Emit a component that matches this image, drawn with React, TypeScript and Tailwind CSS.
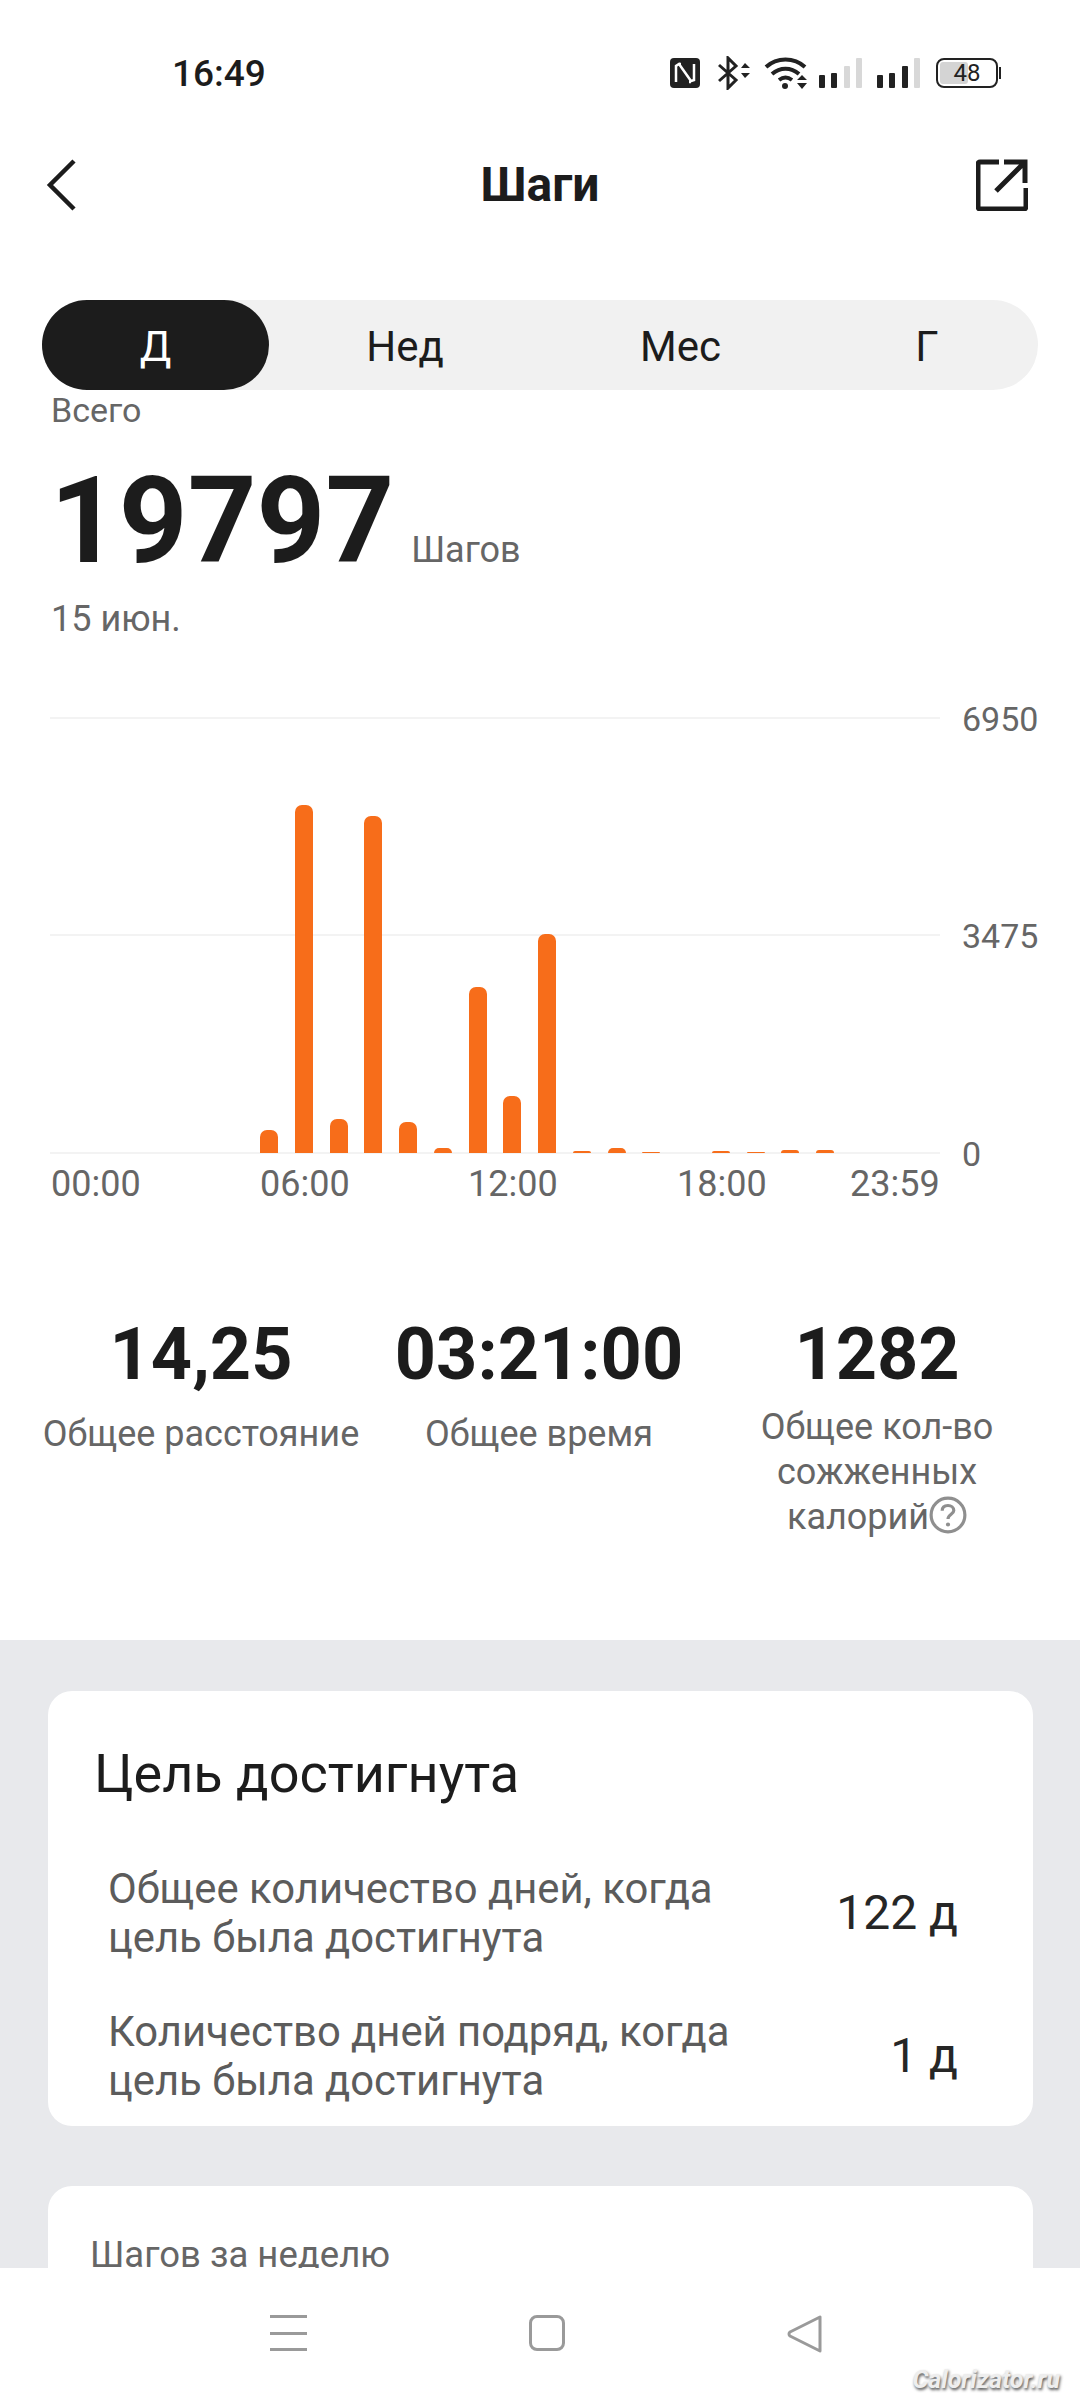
const bars = [23, 348, 34, 337, 31, 5, 166, 57, 219, 2, 5, 1, 0, 2, 1, 3, 3];

function StatusIcons() {
  return (
    <div className="flex items-center">
      <svg width="30" height="30" viewBox="0 0 30 30">
        <rect width="30" height="30" rx="4" fill="#222" />
        <path d="M6 24V8l3-2 12 17 3-1V6M11 6h-2M19 24h2" stroke="#fff" strokeWidth="2.500" fill="none" />
      </svg>
      <svg width="36" height="34" viewBox="0 0 36 34" className="ml-[16px]" fill="none">
        <path d="M3 9l17 15-8 8V2l8 8L3 25" stroke="#222" strokeWidth="3" />
        <path d="M25 12l4-5 5 5zM25 17h9l-5 5z" fill="#222" />
      </svg>
      <svg width="46" height="34" viewBox="0 0 46 34" className="ml-[12px]" fill="none">
        <path d="M2 11c11-10 28-10 39 0M8 18c8-7 19-7 27 0M15 24c4-3 9-3 13 0" stroke="#222" strokeWidth="4" />
        <circle cx="21" cy="30" r="3" fill="#222" />
        <path d="M33 24l5-5 5 5zM33 27h10l-5 6z" fill="#222" />
      </svg>
      <svg width="46" height="30" viewBox="0 0 46 30" className="ml-[9px]">
        <rect x="0" y="17" width="6" height="13" rx="1" fill="#222" />
        <rect x="12" y="15" width="6" height="15" rx="1" fill="#222" />
        <rect x="25" y="8" width="6" height="22" rx="1" fill="#d8d8d8" />
        <rect x="37" y="0" width="6" height="30" rx="1" fill="#d8d8d8" />
      </svg>
      <svg width="46" height="30" viewBox="0 0 46 30" className="ml-[12px]">
        <rect x="0" y="17" width="6" height="13" rx="1" fill="#222" />
        <rect x="12" y="15" width="6" height="15" rx="1" fill="#222" />
        <rect x="25" y="8" width="6" height="22" rx="1" fill="#222" />
        <rect x="37" y="0" width="6" height="30" rx="1" fill="#d8d8d8" />
      </svg>
      <div className="ml-[13px] flex items-center">
        <div className="relative flex h-[30px] w-[62px] items-center justify-center overflow-hidden rounded-[8px] border-2 border-[#222]">
          <div className="absolute inset-y-[2px] left-[2px] w-[28px] rounded-[3px] bg-[#d4d4d4]" />
          <span className="relative text-[24px] leading-none text-[#222]">48</span>
        </div>
        <div className="ml-[1px] h-[12px] w-[2px] bg-[#222]" />
      </div>
    </div>
  );
}

function Tabs() {
  return (
    <div className="mx-[42px] mt-[72px] flex h-[90px] items-center rounded-[45px] bg-[#f1f1f1] pt-[3px] text-[42px] text-[#1c1c1c]">
      <div className="-mt-[3px] flex h-[90px] w-[227px] items-center justify-center rounded-[45px] bg-[#1c1c1c] pt-[3px] text-white">Д</div>
      <div className="ml-[96px] w-[80px] text-center">Нед</div>
      <div className="ml-[195px] w-[80px] text-center">Мес</div>
      <div className="ml-[167px] w-[80px] text-center">Г</div>
    </div>
  );
}

function Chart() {
  return (
    <div className="relative ml-[50px] mt-[77px] h-[490px] w-[990px]">
      {/* grid lines */}
      <div className="absolute left-0 top-0 h-[2px] w-[890px] bg-[#f3f3f3]" />
      <div className="absolute left-0 top-[217px] h-[2px] w-[890px] bg-[#f3f3f3]" />
      <div className="absolute left-0 top-[435px] h-[2px] w-[890px] bg-[#f3f3f3]" />
      <span className="absolute left-[912px] top-[-18px] text-[34px] leading-[40px] text-[#666]">6950</span>
      <span className="absolute left-[912px] top-[199px] text-[34px] leading-[40px] text-[#666]">3475</span>
      <span className="absolute left-[912px] top-[417px] text-[34px] leading-[40px] text-[#666]">0</span>

      <div className="absolute left-[210px] top-0 flex h-[436px] items-end gap-[16.75px]">
        {bars.map((h, i) => (
          <div
            key={i}
            className="w-[18px] rounded-t-[7px] bg-[#f76d1a]"
            style={{ height: h }}
          />
        ))}
      </div>

      <div className="absolute left-[1px] top-[447px] flex text-[36px] leading-[40px] text-[#666]">
        <span className="w-[88px]">00:00</span>
        <span className="ml-[121px] w-[88px]">06:00</span>
        <span className="ml-[120px] w-[88px]">12:00</span>
        <span className="ml-[121px] w-[88px]">18:00</span>
        <span className="ml-[85px] w-[88px]">23:59</span>
      </div>
    </div>
  );
}

function Stats() {
  return (
    <div className="mt-[106px] flex h-[327px] items-start text-center">
      <div className="ml-[21px] w-[360px]">
        <div className="text-[72px] font-bold leading-[84px] text-[#1c1c1c]">14,25</div>
        <div className="mt-[15px] text-[36px] leading-[45px] text-[#666]">Общее расстояние</div>
      </div>
      <div className="w-[316px]">
        <div className="text-[72px] font-bold leading-[84px] text-[#1c1c1c]">03:21:00</div>
        <div className="mt-[15px] text-[36px] leading-[45px] text-[#666]">Общее время</div>
      </div>
      <div className="w-[360px]">
        <div className="text-[72px] font-bold leading-[84px] text-[#1c1c1c]">1282</div>
        <div className="mt-[8px] text-[36px] leading-[45px] text-[#666]">
          Общее кол-во
          <br />
          сожженных
          <br />
          <span className="inline-flex items-center">
            калорий
            <svg width="38" height="38" viewBox="0 0 36 36" fill="none" className="mb-[6px]">
              <circle cx="18" cy="18" r="16" stroke="#8f8f8f" strokeWidth="3" />
              <path d="M12.5 14c0-3.5 2.500-5 5.500-5s5.500 2 5.500 4.800c0 3.500-5.500 3.700-5.500 8" stroke="#8f8f8f" strokeWidth="3" />
              <circle cx="18" cy="27" r="2" fill="#8f8f8f" />
            </svg>
          </span>
        </div>
      </div>
    </div>
  );
}

function GoalRow({ text, value }: { text: string[]; value: string }) {
  return (
    <div className="flex items-center justify-between pl-[14px] pr-[54px]">
      <div className="text-[41.8px] leading-[49px] text-[#5c5c5c]">
        {text[0]}
        <br />
        {text[1]}
      </div>
      <div className="text-[48px] text-[#262626]">{value}</div>
    </div>
  );
}

export default function App() {
  return (
    <div className="flex h-[2400px] w-[1080px] flex-col overflow-hidden bg-white font-['Roboto',sans-serif]">
      <div className="flex-1 overflow-hidden">
        {/* Status bar */}
        <div className="flex h-[112px] items-center justify-between pl-[172px] pr-[79px] pt-[34px]">
          <span className="text-[37px] font-medium leading-none text-[#1c1c1c]">16:49</span>
          <StatusIcons />
        </div>

        {/* Header */}
        <div className="flex h-[116px] items-center justify-between pl-[46px] pr-[52px] pt-[29px]">
          <div className="w-[58px]">
            <svg width="32" height="54" viewBox="0 0 32 54" fill="none">
              <path d="M28 3L4 27l24 24" stroke="#1c1c1c" strokeWidth="4.500" />
            </svg>
          </div>
          <span className="text-[48px] font-bold leading-none text-[#1c1c1c]">Шаги</span>
          <svg width="52" height="52" viewBox="0 0 52 52" fill="none">
            <path d="M23 3H4a2 2 0 0 0-2 2v43a2 2 0 0 0 2 2h44a2 2 0 0 0 2-2V29" stroke="#1c1c1c" strokeWidth="5" />
            <path d="M20 32L49 3M28 3h21v21" stroke="#1c1c1c" strokeWidth="5" />
          </svg>
        </div>

        <Tabs />

        <div className="ml-[51px] text-[34px] leading-[40px] text-[#666]">Всего</div>
        <div className="ml-[50px] mt-[26px] flex items-baseline">
          <span className="text-[120px] font-bold leading-[130px] text-[#1c1c1c]">19797</span>
          <span className="ml-[17px] text-[36px] text-[#666]">Шагов</span>
        </div>
        <div className="ml-[51px] mt-[12px] text-[36px] leading-[42px] text-[#666]">15 июн.</div>

        <Chart />
        <Stats />

        <div className="bg-[#e8e9ec] pl-[48px] pr-[47px] pt-[51px]">
          <div className="h-[435px] rounded-[24px] bg-white pl-[46px] pr-[21px] pt-[50px]">
            <div className="text-[54px] leading-[66px] text-[#1c1c1c]">Цель достигнута</div>
            <div className="mt-[57px] flex flex-col gap-[45px]">
              <GoalRow text={["Общее количество дней, когда", "цель была достигнута"]} value="122 д" />
              <GoalRow text={["Количество дней подряд, когда", "цель была достигнута"]} value="1 д" />
            </div>
          </div>
          <div className="mt-[60px] h-[400px] rounded-[24px] bg-white pl-[42px] pt-[49px]">
            <div className="text-[36.5px] leading-[40px] text-[#666]">Шагов за неделю</div>
          </div>
        </div>
      </div>

      {/* Nav bar */}
      <div className="relative flex h-[132px] shrink-0 items-start bg-white pl-[270px] pt-[47px]">
        <div className="flex h-[36px] w-[37px] flex-col justify-between">
          <div className="h-[3px] bg-[#9a9a9a]" />
          <div className="h-[3px] bg-[#9a9a9a]" />
          <div className="h-[3px] bg-[#9a9a9a]" />
        </div>
        <div className="ml-[222px] h-[36px] w-[36px] rounded-[8px] border-[3px] border-[#9a9a9a]" />
        <svg width="36" height="38" viewBox="0 0 36 38" fill="none" className="ml-[222px]">
          <path d="M33 2v34L3 21a2.500 2.500 0 0 1 0-4z" stroke="#9a9a9a" strokeWidth="3" strokeLinejoin="round" />
        </svg>
        <span className="absolute bottom-[8px] right-[20px] text-[25px] font-bold italic leading-none text-[#eee] [text-shadow:1px_2px_3px_#555]">
          Calorizator.ru
        </span>
      </div>
    </div>
  );
}
